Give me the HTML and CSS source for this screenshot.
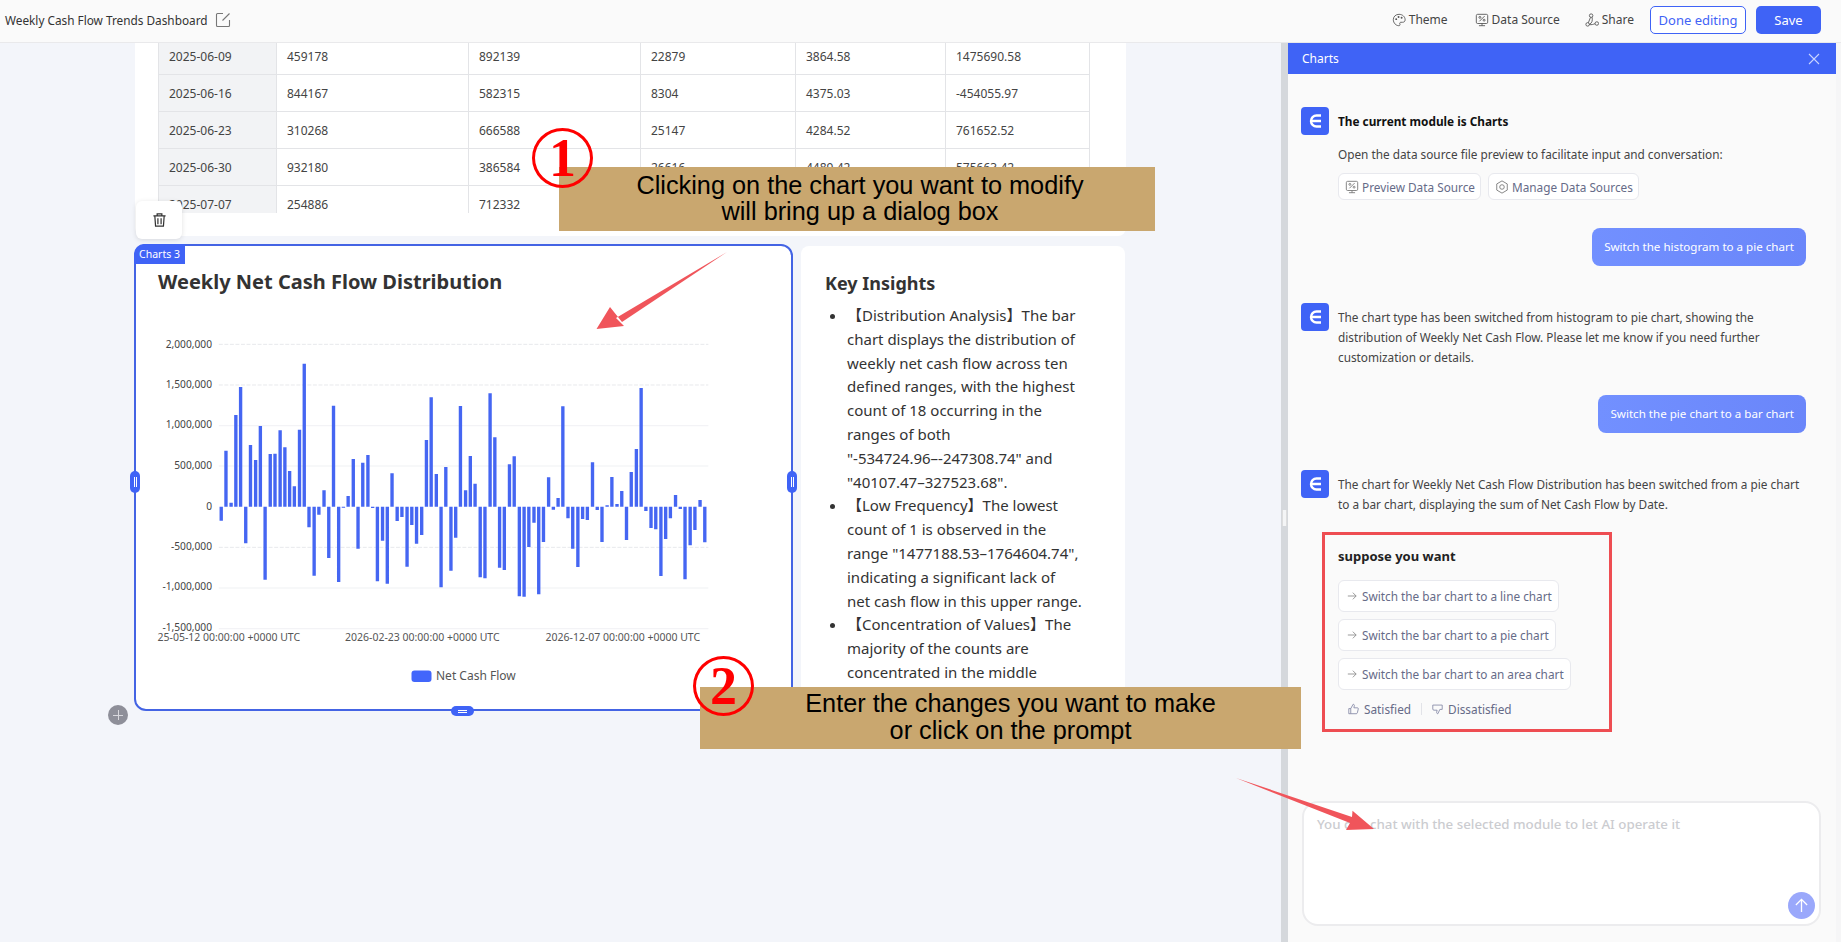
FILE: index.html
```html
<!DOCTYPE html>
<html lang="en">
<head>
<meta charset="utf-8">
<title>Weekly Cash Flow Trends Dashboard</title>
<link rel="stylesheet" href="styles.css">
</head>
<body>
<svg class="defs" width="0" height="0" aria-hidden="true">
  <symbol id="i-data" viewBox="0 0 16 16"><g fill="none" stroke="currentColor" stroke-width="1"><rect x="1.5" y="1.5" width="13" height="10.5" rx="1.5"/><path d="M8 12v2.5M4.5 14.5h7M5 9.5l6-6"/><circle cx="5.6" cy="5" r="1.1"/><circle cx="10.4" cy="8.2" r="1.1"/></g></symbol>
  <symbol id="i-arrow" viewBox="0 0 12 12"><path d="M1 6h10M7 2l4 4-4 4" fill="none" stroke="currentColor" stroke-width="1"/></symbol>
  <symbol id="i-logo" viewBox="0 0 28 28"><rect width="28" height="28" rx="4" fill="#3f63f6"/><path d="M20 8.5h-4.5a5.5 5.5 0 0 0 0 11H20M10.500 14H20" fill="none" stroke="#fff" stroke-width="2.400"/></symbol>
</svg>

<header class="topbar">
  <div class="doc-title">
    <span>Weekly Cash Flow Trends Dashboard</span>
    <svg class="edit-icon" viewBox="0 0 16 16"><path d="M8 1.500H2.500a1 1 0 0 0-1 1v11a1 1 0 0 0 1 1h11a1 1 0 0 0 1-1V8M7.500 8.500l7-7" fill="none" stroke="#777" stroke-width="1.100"/></svg>
  </div>
  <nav class="actions">
    <a class="action action-theme"><svg class="action-icon" viewBox="0 0 16 16"><path d="M8 1.500C4.200 1.500 1.500 4.200 1.500 7.600c0 3.700 3 6.900 6.200 6.900 1.500 0 1.700-1 1.300-1.900-.5-1.100 0-2 1.300-2h1.900c1.500 0 2.800-.9 2.800-2.900 0-3.500-3.100-6.200-7-6.200z" fill="none" stroke="#555" stroke-width="1"/><circle cx="4.800" cy="7" r="1.100" fill="#555"/><circle cx="7.500" cy="4.500" r="1.100" fill="#555"/><circle cx="11" cy="5.500" r="1.100" fill="#555"/></svg>Theme</a>
    <a class="action action-data"><svg class="action-icon"><use href="#i-data"/></svg>Data Source</a>
    <a class="action action-share"><svg class="action-icon" viewBox="0 0 16 16"><g fill="none" stroke="#555" stroke-width="1"><circle cx="7" cy="3" r="2"/><circle cx="3" cy="13" r="2"/><circle cx="13.500" cy="12" r="2"/><path d="M6.300 5 3.800 11.200M8 4.700c1 3.500 0 7-3 8.300M5 13.200c2.500.500 4.500-.2 6.500-1"/></g></svg>Share</a>
    <button class="btn btn-outline">Done editing</button>
    <button class="btn btn-primary">Save</button>
  </nav>
</header>

<div class="workspace">
  <main class="canvas">
    <div class="sheet">
      <section class="table-card">
        <div class="table-clip">
          <table class="data-table">
            <colgroup><col class="c1"><col class="c2"><col class="c3"><col class="c4"><col class="c5"><col class="c6"></colgroup>
            <tr><th>2025-06-09</th><td>459178</td><td>892139</td><td>22879</td><td>3864.58</td><td>1475690.58</td></tr>
            <tr><th>2025-06-16</th><td>844167</td><td>582315</td><td>8304</td><td>4375.03</td><td>-454055.97</td></tr>
            <tr><th>2025-06-23</th><td>310268</td><td>666588</td><td>25147</td><td>4284.52</td><td>761652.52</td></tr>
            <tr><th>2025-06-30</th><td>932180</td><td>386584</td><td>26616</td><td>4489.42</td><td>575663.42</td></tr>
            <tr><th>2025-07-07</th><td>254886</td><td>712332</td><td></td><td></td><td></td></tr>
          </table>
        </div>
      </section>

      <div class="chart-row">
        <section class="chart-card">
          <span class="chart-tag">Charts 3</span>
          <h2 class="chart-title">Weekly Net Cash Flow Distribution</h2>
          <svg class="chart-svg" viewBox="0 0 655 400">
            <g transform="translate(-16 20) scale(.3954 .33333)">
              <g class="grid">
                <path class="dash" d="M250 73H1488M250 195H1488M250 682H1488"/>
                <path d="M250 317H1488M250 438H1488M250 804H1488M250 926H1488"/>
              </g>
              <path class="bars" d="M256 560V602M268 560V392M281 560V548M293 560V285M305 560V201M318 560V670M330 560V375M343 560V420M355 560V318M367 560V779M380 560V402M392 560V401M405 560V331M417 560V382M429 560V453M441 560V499M454 560V329M466 560V131M478 560V622M491 560V767M503 560V584M516 560V511M528 560V714M540 560V257M553 560V786M565 560V563M577 560V528M590 560V417M602 560V686M614 560V428M627 560V405M639 560V564M651 560V784M664 560V662M676 560V791M688 560V460M701 560V603M713 560V591M726 560V740M738 560V615M750 560V671M763 560V645M775 560V360M787 560V232M800 560V462M812 560V802M824 560V441M837 560V752M849 560V653M861 560V258M874 560V511M886 560V408M898 560V491M911 560V772M923 560V775M936 560V220M948 560V352M960 560V743M972 560V750M985 560V433M997 560V409M1010 560V829M1022 560V830M1034 560V681M1047 560V608M1059 560V823M1071 560V666M1084 560V472M1096 560V569M1108 560V534M1120 560V259M1133 560V595M1145 560V686M1158 560V741M1170 560V597M1182 560V600M1195 560V427M1207 560V570M1219 560V666M1232 560V556M1244 560V471M1257 560V552M1269 560V513M1281 560V660M1293 560V456M1306 560V387M1318 560V204M1330 560V573M1343 560V624M1355 560V628M1368 560V768M1380 560V657M1392 560V595M1405 560V525M1417 560V567M1429 560V778M1442 560V676M1454 560V630M1467 560V540M1479 560V667"/>
            </g>
            <g class="axis-y">
              <text x="76" y="47.500">2,000,000</text>
              <text x="76" y="88">1,500,000</text>
              <text x="76" y="128">1,000,000</text>
              <text x="76" y="169">500,000</text>
              <text x="76" y="210">0</text>
              <text x="76" y="250">-500,000</text>
              <text x="76" y="290">-1,000,000</text>
              <text x="76" y="331">-1,500,000</text>
            </g>
            <g class="axis-x">
              <text x="21.500" y="341">25-05-12 00:00:00 +0000 UTC</text>
              <text x="209" y="341">2026-02-23 00:00:00 +0000 UTC</text>
              <text x="409.500" y="341">2026-12-07 00:00:00 +0000 UTC</text>
            </g>
            <rect class="legend-key" x="275.500" y="370.500" width="20" height="11.500" rx="3"/>
            <text class="legend-label" x="300" y="379.500">Net Cash Flow</text>
          </svg>
          <span class="handle handle-left"><i></i><i></i></span>
          <span class="handle handle-right"><i></i><i></i></span>
          <span class="handle-bottom"><i></i><i></i></span>
        </section>

        <section class="insights">
          <h3>Key Insights</h3>
          <ul>
            <li>【Distribution Analysis】The bar<br>chart displays the distribution of<br>weekly net cash flow across ten<br>defined ranges, with the highest<br>count of 18 occurring in the<br>ranges of both<br>"-534724.96–-247308.74" and<br>"40107.47–327523.68".</li>
            <li>【Low Frequency】The lowest<br>count of 1 is observed in the<br>range "1477188.53–1764604.74",<br>indicating a significant lack of<br>net cash flow in this upper range.</li>
            <li>【Concentration of Values】The<br>majority of the counts are<br>concentrated in the middle</li>
          </ul>
        </section>
      </div>
    </div>

    <button class="trash" aria-label="Delete"><svg viewBox="0 0 16 16"><path d="M1.500 3.500h13M5.500 3.500V1.500h5v2M3 3.500l.8 11h8.400l.8-11M6.300 6v6.500M9.700 6v6.500" fill="none" stroke="#333" stroke-width="1.300"/></svg></button>
    <span class="add-btn"></span>
  </main>

  <div class="gutter"><span class="gutter-grip"></span></div>

  <aside class="panel">
    <div class="panel-head"><span>Charts</span><svg class="panel-close" viewBox="0 0 12 12"><path d="M1 1l10 10M11 1 1 11" stroke="#c9d4ff" stroke-width="1.100" fill="none"/></svg></div>
    <div class="chat">
      <div class="msg">
        <svg class="avatar"><use href="#i-logo"/></svg>
        <div class="msg-body">
          <div class="msg-heading">The current module is Charts</div>
          <p class="msg-lead">Open the data source file preview to facilitate input and conversation:</p>
          <div class="chips">
            <a class="chip chip-preview"><svg class="chip-icon"><use href="#i-data"/></svg>Preview Data Source</a>
            <a class="chip chip-manage"><svg class="chip-icon" viewBox="0 0 16 16"><g fill="none" stroke="currentColor" stroke-width="1"><path d="M8 1 14 4.500v7L8 15l-6-3.500v-7z"/><circle cx="8" cy="8" r="2.600"/></g></svg>Manage Data Sources</a>
          </div>
        </div>
      </div>
      <div class="bubble-row"><div class="bubble">Switch the histogram to a pie chart</div></div>
      <div class="msg msg-reply">
        <svg class="avatar"><use href="#i-logo"/></svg>
        <p class="msg-text">The chart type has been switched from histogram to pie chart, showing the<br>distribution of Weekly Net Cash Flow. Please let me know if you need further<br>customization or details.</p>
      </div>
      <div class="bubble-row"><div class="bubble">Switch the pie chart to a bar chart</div></div>
      <div class="msg msg-reply">
        <svg class="avatar"><use href="#i-logo"/></svg>
        <p class="msg-text">The chart for Weekly Net Cash Flow Distribution has been switched from a pie chart<br>to a bar chart, displaying the sum of Net Cash Flow by Date.</p>
      </div>
      <div class="suggest">
        <div class="suggest-title">suppose you want</div>
        <a class="suggest-item"><svg class="suggest-arrow"><use href="#i-arrow"/></svg>Switch the bar chart to a line chart</a>
        <a class="suggest-item"><svg class="suggest-arrow"><use href="#i-arrow"/></svg>Switch the bar chart to a pie chart</a>
        <a class="suggest-item"><svg class="suggest-arrow"><use href="#i-arrow"/></svg>Switch the bar chart to an area chart</a>
        <div class="feedback">
          <span class="fb"><svg class="fb-icon" viewBox="0 0 14 14"><path d="M1 6.500h2.500v6.500H1zM3.500 6.500 6.500 1c1.200 0 1.800.8 1.500 2L7.500 5.500H12c.8 0 1.300.6 1.100 1.400l-1.200 5c-.2.700-.7 1.100-1.400 1.100H3.500" fill="none" stroke="currentColor" stroke-width="1"/></svg>Satisfied</span>
          <i class="fb-sep"></i>
          <span class="fb"><svg class="fb-icon" viewBox="0 0 14 14"><path d="M1 2h12v5.500h-3L7.500 13c-1.200 0-1.800-.8-1.500-2l.5-2.500H2.500C1.500 8.500 1 8 1 7z" fill="none" stroke="currentColor" stroke-width="1"/></svg>Dissatisfied</span>
        </div>
      </div>
    </div>
    <div class="composer">
      <span class="placeholder">You can chat with the selected module to let AI operate it</span>
      <button class="send" aria-label="Send"><svg viewBox="0 0 16 16"><path d="M8 15V1.500M2 7.500l6-6 6 6" fill="none" stroke="#fff" stroke-width="1.400"/></svg></button>
    </div>
  </aside>
  <div class="edge"></div>
</div>

<div class="note note-one">Clicking on the chart you want to modify<br>will bring up a dialog box</div>
<div class="note note-two">Enter the changes you want to make<br>or click on the prompt</div>
<div class="circled circled-one">1</div>
<div class="circled circled-two">2</div>
<div class="redbox"></div>
<svg class="arrows" viewBox="0 0 1841 942" aria-hidden="true">
  <path d="M727 252 622 322 610 307 596.500 329 624 326 616 318 727 252z"/>
  <path d="M1236 778 1350 823 1346 830 1374 829 1352.500 810.700 1352 817z"/>
</svg>
</body>
</html>
```

FILE: styles.css
```css
* { box-sizing: border-box; }
html, body { margin: 0; height: 100%; }
body {
  width: 1841px;
  height: 942px;
  overflow: hidden;
  position: relative;
  font-family: "Noto Sans", "Noto Sans CJK SC", sans-serif;
  font-size: 12px;
  color: #333;
  background: #f3f5fa;
}
.defs { position: absolute; }

/* top bar */
.topbar {
  height: 43px;
  display: flex;
  align-items: center;
  justify-content: space-between;
  padding: 0 20px 3px 5px;
  background: #fafafa;
  border-bottom: 1px solid #e9e9eb;
}
.doc-title { display: flex; align-items: center; gap: 7px; font-size: 11.800px; color: #333; }
.edit-icon { width: 16px; height: 16px; }
.actions { display: flex; align-items: center; }
.action { display: flex; align-items: center; gap: 3px; color: #444; }
.action-icon { width: 14px; height: 14px; color: #555; }
.action-theme { margin-right: 27px; }
.action-data { margin-right: 25px; }
.action-share { margin-right: 16px; }
.btn {
  height: 28px;
  border-radius: 5px;
  font: inherit;
  font-size: 13px;
  padding: 0;
}
.btn-outline { width: 96px; margin-right: 10px; background: #fff; border: 1px solid #3f63f6; color: #3f63f6; }
.btn-primary { width: 65px; background: #3f63f6; border: 0; color: #fff; }

.workspace { display: flex; height: 899px; }

/* canvas */
.canvas { position: relative; width: 1281px; overflow: hidden; background: #f3f5fa; }
.sheet { margin-top: -6px; padding-left: 134px; }
.table-card {
  width: 991px;
  margin-left: 1px;
  padding: 0 36px 23px 23px;
  background: #fff;
  border-radius: 0 0 8px 8px;
}
.table-clip { height: 176px; overflow: hidden; }
.data-table { width: 932px; border-collapse: collapse; table-layout: fixed; }
.c1 { width: 118px; }
.c2 { width: 192px; }
.c3 { width: 172px; }
.c4 { width: 155px; }
.c5 { width: 150px; }
.data-table th, .data-table td {
  height: 37px;
  padding: 0 10px;
  border: 1px solid #e3e4e7;
  font-weight: 400;
  text-align: left;
  color: #444;
}
.data-table th { background: #f2f3f5; }

.chart-row { display: flex; align-items: flex-start; gap: 8px; margin-top: 8px; }
.chart-card {
  position: relative;
  width: 659px;
  height: 467px;
  background: #fff;
  border: 2px solid #4464e4;
  border-radius: 12px;
}
.chart-tag {
  position: absolute;
  top: -2px;
  left: -2px;
  width: 51px;
  height: 20px;
  line-height: 20px;
  text-align: center;
  font-size: 10.500px;
  color: #fff;
  background: #3f63f6;
  border-radius: 10px 0 0 0;
}
.chart-title { margin: 0; height: 54px; padding: 22px 0 0 22px; font-size: 20px; line-height: 28px; font-weight: 700; color: #333; }
.chart-svg { display: block; width: 655px; height: 400px; }
.grid path { fill: none; stroke: #eff0f3; stroke-width: 2.500; }
.grid .dash { stroke-dasharray: 10 4; stroke: #e6e7ea; }
.bars { fill: none; stroke: #4566f2; stroke-width: 8.500; }
.axis-y text { text-anchor: end; font-size: 10.200px; fill: #444; }
.axis-x text { font-size: 10.500px; fill: #555; }
.legend-key { fill: #4266fb; }
.legend-label { font-size: 12px; fill: #555; }

.handle {
  position: absolute;
  top: 225px;
  width: 10px;
  height: 22px;
  display: flex;
  align-items: center;
  justify-content: center;
  gap: 1px;
  background: #3f63f6;
  border-radius: 5px;
}
.handle i { width: 1px; height: 10px; background: #fff; }
.handle-left { left: -6px; }
.handle-right { right: -6px; }
.handle-bottom {
  position: absolute;
  left: 315px;
  bottom: -7px;
  width: 23px;
  height: 10px;
  display: flex;
  flex-direction: column;
  align-items: center;
  justify-content: center;
  gap: 1px;
  background: #3f63f6;
  border-radius: 5px;
}
.handle-bottom i { width: 9px; height: 1px; background: #fff; }

.insights {
  width: 324px;
  height: 465px;
  margin-top: 2px;
  padding: 24px 24px 0;
  overflow: hidden;
  background: #fff;
  border-radius: 8px;
}
.insights h3 { margin: 0 0 8px; font-size: 18px; line-height: 26px; font-weight: 700; color: #333; }
.insights ul { margin: 0; padding: 0 0 0 22px; }
.insights li { font-size: 15px; line-height: 23.800px; color: #333; white-space: nowrap; }

.trash {
  position: absolute;
  left: 136px;
  top: 158px;
  width: 46px;
  height: 38px;
  padding: 0;
  display: flex;
  align-items: center;
  justify-content: center;
  background: #fff;
  border: 0;
  border-radius: 6px;
  box-shadow: 0 1px 5px rgba(0, 0, 0, .12);
}
.trash svg { width: 15px; height: 16px; }
.add-btn {
  position: absolute;
  left: 108px;
  top: 662px;
  width: 20px;
  height: 20px;
  border-radius: 50%;
  background:
    linear-gradient(#d8d8dd, #d8d8dd) center / 10px 1px no-repeat,
    linear-gradient(#d8d8dd, #d8d8dd) center / 1px 10px no-repeat,
    #8e8f99;
}

.gutter { position: relative; width: 7px; background: #d5d8dc; }
.gutter-grip {
  position: absolute;
  left: 1px;
  top: 467px;
  width: 5px;
  height: 16px;
  background: #f4f5f6;
  border-left: 1px solid #ddd;
  border-right: 1px solid #ddd;
}

/* right panel */
.panel { position: relative; display: flex; flex-direction: column; width: 548px; background: #fafafa; }
.panel-head {
  flex: none;
  display: flex;
  align-items: center;
  justify-content: space-between;
  height: 31px;
  padding: 0 16px 0 14px;
  color: #fff;
  background: #3f63f6;
}
.panel-close { width: 12px; height: 12px; }
.chat { flex: 1; padding: 33px 30px 0 13px; font-size: 11.800px; }
.msg { display: flex; gap: 9px; }
.avatar { flex: none; width: 28px; height: 28px; }
.msg-body { flex: 1; }
.msg-heading { height: 28px; line-height: 28px; font-weight: 700; color: #111; }
.msg-lead { margin: 9px 0; line-height: 20px; color: #444; }
.chips { display: flex; gap: 7px; }
.chip {
  display: flex;
  align-items: center;
  gap: 3px;
  height: 27px;
  padding: 0 5px 0 6px;
  color: #666b88;
  background: #fff;
  border: 1px solid #e8e9ee;
  border-radius: 6px;
}
.chip-icon { width: 14px; height: 14px; color: #777; }
.bubble-row { display: flex; justify-content: flex-end; margin-top: 28px; }
.bubble {
  height: 38px;
  line-height: 38px;
  padding: 0 12px;
  font-size: 11.600px;
  color: #fff;
  background: linear-gradient(90deg, #7290ff, #6a86fa);
  border-radius: 8px;
}
.msg-reply { margin-top: 37px; }
.msg-text { margin: 4px 0 0; line-height: 20px; color: #444; white-space: nowrap; }

.suggest { margin: 32px 0 0 37px; }
.suggest-title { height: 20px; line-height: 20px; font-size: 13px; font-weight: 700; color: #222; margin-bottom: 14px; }
.suggest-item {
  display: flex;
  align-items: center;
  gap: 5px;
  width: fit-content;
  height: 32px;
  margin-bottom: 7px;
  padding: 0 6px 0 8px;
  color: #666b88;
  background: #fff;
  border: 1px solid #e8e9ee;
  border-radius: 6px;
}
.suggest-arrow { width: 10px; height: 10px; color: #888; }
.feedback { display: flex; align-items: center; height: 20px; margin-top: 9px; padding-left: 10px; color: #666b88; }
.fb { display: flex; align-items: center; gap: 5px; }
.fb-icon { width: 11px; height: 12px; color: #7b80a0; }
.fb-sep { width: 1px; height: 12px; margin: 0 10px; background: #e2e3e8; }

.composer {
  position: relative;
  flex: none;
  width: 519px;
  height: 125px;
  margin: 0 0 16px 14px;
  padding: 11px 13px;
  background: #fff;
  border: 2px solid #ececee;
  border-radius: 16px;
}
.placeholder { font-size: 13.300px; font-weight: 500; line-height: 20px; color: #cbccd0; }
.send {
  position: absolute;
  right: 4px;
  bottom: 5px;
  width: 27px;
  height: 27px;
  padding: 6px;
  background: #9aa8fb;
  border: 0;
  border-radius: 50%;
}
.send svg { display: block; width: 15px; height: 15px; }
.edge { width: 5px; background: #f6f6f7; }

/* annotations laid over the page */
.note {
  position: absolute;
  display: flex;
  align-items: center;
  justify-content: center;
  text-align: center;
  font-family: "Liberation Sans", Arial, sans-serif;
  color: #000;
  background: #c9a76f;
}
.note-one { left: 559px; top: 167px; width: 596px; height: 64px; font-size: 25.300px; line-height: 26px; padding: 0 0 2px 6px; }
.note-two { left: 700px; top: 687px; width: 601px; height: 62px; font-size: 25.300px; line-height: 27px; padding: 0 0 2px 20px; }
.circled {
  position: absolute;
  width: 61px;
  height: 60px;
  display: flex;
  align-items: center;
  justify-content: center;
  font-family: "Liberation Serif", serif;
  font-size: 54px;
  font-weight: 700;
  line-height: 1;
  color: #f00;
  border: 3px solid #f00;
  border-radius: 50%;
}
.circled-one { left: 532px; top: 128px; }
.circled-two { left: 693px; top: 656px; }
.redbox { position: absolute; left: 1322px; top: 532px; width: 290px; height: 200px; border: 3px solid #ee4d52; }
.arrows { position: absolute; left: 0; top: 0; width: 1841px; height: 942px; pointer-events: none; }
.arrows path { fill: #f0555b; }
```
